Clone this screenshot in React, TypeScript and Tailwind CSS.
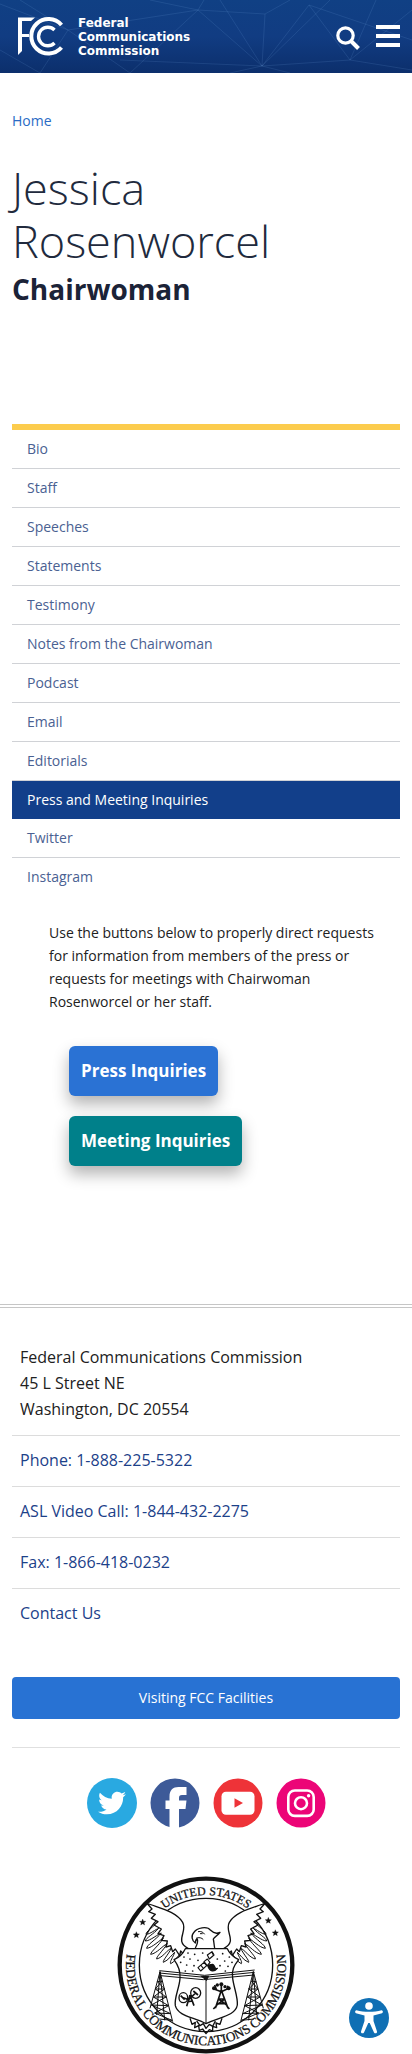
import { FaTwitter } from 'react-icons/fa';

const navItems = [
  'Bio',
  'Staff',
  'Speeches',
  'Statements',
  'Testimony',
  'Notes from the Chairwoman',
  'Podcast',
  'Email',
  'Editorials',
  'Press and Meeting Inquiries',
  'Twitter',
  'Instagram',
];

const currentItem = 'Press and Meeting Inquiries';

const contactLinks = ['Phone: 1-888-225-5322', 'ASL Video Call: 1-844-432-2275', 'Fax: 1-866-418-0232', 'Contact Us'];

function HeaderPattern() {
  return (
    <svg
      className="absolute inset-0 h-full w-full"
      viewBox="0 0 412 73"
      preserveAspectRatio="xMidYMid slice"
      fill="none"
      stroke="#7fb0e8"
      strokeOpacity="0.14"
      aria-hidden="true"
    >
      <path d="M0 4 68 30 198 10 262 66 330 0M40 73 68 30 20 0M68 30 130 73 198 10 150 0M198 10 204 0M198 10 265 14 262 66 120 60M262 66 309 5 412 40M309 5 350 60 412 10M262 66 350 60 412 70M262 66 220 0M265 14 290 0M0 50 40 73M350 60 376 0M230 73 262 66 290 73" />
    </svg>
  );
}

function FccMark() {
  return (
    <svg className="h-[39px] w-[46px]" viewBox="0 0 46 39" fill="none" stroke="#fff" aria-hidden="true">
      <path d="M0 .5H17L13 4H4V17H11V20H4V34L0 38Z" fill="#fff" stroke="none" />
      <path d="M43.5 8A17.2 17.2 0 1 0 43.5 30.5" strokeWidth="4" />
      <path d="M36.5 13A9.3 9.3 0 1 0 36.5 26" strokeWidth="3.4" />
    </svg>
  );
}

function SearchIcon() {
  return (
    <svg className="h-6 w-6" viewBox="0 0 24 24" fill="none" stroke="#fff" aria-hidden="true">
      <circle cx="9.5" cy="9.5" r="7.7" strokeWidth="3.2" />
      <path d="M15 15 22.5 22.5" strokeWidth="4" />
    </svg>
  );
}

function MenuIcon() {
  return (
    <svg className="h-[22px] w-6" viewBox="0 0 24 22" fill="#fff" aria-hidden="true">
      <path d="M0 0H24V4H0ZM0 9H24V13H0ZM0 18H24V22H0Z" />
    </svg>
  );
}

function FacebookIcon() {
  return (
    <svg className="size-[50px]" viewBox="0 0 50 50" aria-hidden="true">
      <circle cx="25" cy="25" r="24.5" fill="#3d5a98" />
      <path d="M19.5 50V31H15.5V22.5H19.5V18.5C19.5 12 23 9 28.5 9H36.5V17H32C29.7 17 29 18 29 20V22.5H36.5L35.5 31H29V50Z" fill="#fff" />
    </svg>
  );
}

function YoutubeIcon() {
  return (
    <svg className="size-[50px]" viewBox="0 0 50 50" aria-hidden="true">
      <circle cx="25" cy="25" r="24.5" fill="#ee3338" />
      <rect x="8.5" y="13.7" width="33" height="23" rx="4.5" fill="#fff" />
      <path d="M21.5 20.3 30 25 21.5 29.7Z" fill="#ee3338" />
    </svg>
  );
}

function InstagramIcon() {
  return (
    <svg className="size-[50px]" viewBox="0 0 50 50" fill="none" stroke="#fff" strokeWidth="2.6" aria-hidden="true">
      <circle cx="25" cy="25" r="24.5" fill="#ec0577" stroke="none" />
      <rect x="12.3" y="12.5" width="25.4" height="25.4" rx="6.5" />
      <circle cx="25" cy="25.2" r="6" />
      <circle cx="32.6" cy="17.8" r="1.7" fill="#fff" stroke="none" />
    </svg>
  );
}

function TwitterIcon() {
  return (
    <span className="flex size-[50px] items-center justify-center rounded-full bg-[#29a9e1] text-white">
      <FaTwitter className="size-7" aria-hidden="true" />
    </span>
  );
}

const socialLinks = [
  { label: 'Twitter', Icon: TwitterIcon },
  { label: 'Facebook', Icon: FacebookIcon },
  { label: 'YouTube', Icon: YoutubeIcon },
  { label: 'Instagram', Icon: InstagramIcon },
];

function Wing() {
  return (
    <>
      <path
        d="M102 94C135 108 190 118 210 152C226 180 184 208 226 230L216 250 204 238 201 252 188 232 180 240 174 222 160 226 164 208 146 206 154 192 136 186 146 172 124 160 136 150 116 140 128 128 108 120 118 112Z"
        fill="#fff"
      />
      <path
        d="M128 158C118 168 100 180 100 188C112 188 130 172 138 170C124 186 98 200 98 208C112 208 138 186 146 184C130 204 102 220 102 230C120 228 142 204 152 200C138 222 114 240 114 248C132 246 152 220 164 216C150 238 130 256 132 262C150 258 164 234 176 230C166 250 150 266 152 272C168 266 178 248 186 242C182 256 170 270 174 276C188 270 192 256 200 250C202 262 192 272 196 278L212 262"
        strokeWidth="3"
      />
    </>
  );
}

function Tower() {
  return (
    <path
      d="M142 300 112 410M142 300 180 450M142 300 132 430M142 300 156 446M134 330 148 328M128 352 156 352M122 376 160 376M116 400 168 402M126 424 174 426M140 442 178 446M134 330 156 352M148 328 128 352 160 376 116 400 174 426M156 352 122 376 168 402 126 424 178 446"
      strokeWidth="3"
    />
  );
}

const shieldStars = [
  [204, 272], [214, 256], [222, 280], [232, 262], [226, 244], [244, 282], [246, 248], [256, 266], [300, 246], [314, 262],
  [330, 246], [322, 282], [336, 268], [350, 256], [346, 284], [358, 272], [240, 298], [218, 298], [338, 298], [270, 244],
];

const ringStars = [
  [90, 152],
  [71, 190],
  [467, 147],
  [488, 184],
];

function Seal() {
  return (
    <svg
      className="size-[178px]"
      viewBox="13 13 534 534"
      fill="none"
      stroke="#111"
      strokeWidth="4"
      strokeLinejoin="round"
      role="img"
      aria-label="Seal of the Federal Communications Commission"
    >
      <defs>
        <path id="seal-top" d="M70 280A210 210 0 0 1 490 280" />
        <path id="seal-bottom" d="M54 200A240 240 0 1 0 506 200" />
      </defs>
      <circle cx="280" cy="280" r="259" strokeWidth="13" fill="#fff" />
      <circle cx="280" cy="280" r="200" />
      <g fill="#111" strokeWidth="0.8" fontFamily="Liberation Serif, serif">
        <text fontSize="36" textAnchor="middle">
          <textPath href="#seal-top" startOffset="50%">UNITED STATES</textPath>
        </text>
        <text fontSize="40" textAnchor="middle">
          <textPath href="#seal-bottom" startOffset="50%">FEDERAL COMMUNICATIONS COMMISSION</textPath>
        </text>
        {ringStars.map(([x, y]) => (
          <path key={x} transform={`translate(${x} ${y})`} d="M0-10 2.6-3.5 9.5-3 4.2 1.4 6 8 0 4.4-6 8-4.2 1.4-9.5-3-2.6-3.5Z" />
        ))}
      </g>
      <Wing />
      <g transform="matrix(-1 0 0 1 560 0)">
        <Wing />
      </g>
      <Tower />
      <g transform="matrix(-1 0 0 1 564 0)">
        <Tower />
      </g>
      <path d="M218 231H344C352 250 366 258 378 264C364 282 356 296 360 320C364 350 376 376 374 400C368 434 318 436 280 456C244 436 196 434 188 402C184 378 200 350 202 320C204 296 196 280 184 264C198 258 210 248 218 231Z" fill="#fff" />
      <path d="M248 229C256 214 256 208 254 202C248 204 248 208 248 214C238 208 234 192 244 182C252 168 284 162 294 176C304 186 314 186 322 182C316 190 306 196 302 202C304 212 304 220 306 229" fill="#fff" />
      <path d="M256 180C266 178 272 182 276 188M262 186H270M250 200C258 196 268 198 272 204" strokeWidth="3" />
      <path d="M140 297 276 311 426 295M140 304 276 317 426 302M144 312 272 324 424 310M280 322V454" strokeWidth="3" />
      <path d="M262 312H290L282 328Z" fill="#111" stroke="none" />
      <g fill="#111" stroke="none">
        {shieldStars.map(([x, y]) => (
          <circle key={`${x}-${y}`} cx={x} cy={y} r="2.6" />
        ))}
      </g>
      <path d="M256 288 274 272 282 282 264 298ZM284 250 298 240 304 250 290 262ZM274 270 284 262 292 272 284 282ZM264 280 272 290" strokeWidth="3.5" />
      <path d="M286 284C292 300 304 302 314 290C304 294 308 280 300 278C294 278 288 280 286 284Z" fill="#111" />
      <ellipse cx="212" cy="378" rx="13" ry="15" />
      <ellipse cx="249" cy="364" rx="15" ry="16" />
      <path d="M212 378 228 384 249 364M232 370 222 404M232 370 244 402M225 390 240 388M204 372 216 384M242 358 256 370" strokeWidth="5" />
      <path d="M326 356 308 410M326 356 346 410M318 382H336M314 396 340 396M318 382 342 400M336 382 310 402M302 412 312 402M350 412 342 402" strokeWidth="5" />
      <path d="M326 358V338M326 360 304 352M326 360 348 350M312 356 306 340M342 354 346 342" strokeWidth="5" />
      <g fill="#111" stroke="none">
        <circle cx="304" cy="350" r="6" />
        <circle cx="314" cy="340" r="5" />
        <circle cx="326" cy="338" r="6" />
        <circle cx="337" cy="345" r="5" />
        <circle cx="348" cy="350" r="6" />
      </g>
      <path d="M232 440 238 458 248 452 246 468 258 462 260 476 270 472 280 486 290 474 300 478 300 464 312 468 310 454 322 458 328 440M252 448 262 462 272 456 280 470 290 458 300 464 308 448" />
    </svg>
  );
}

function AccessibilityIcon() {
  return (
    <svg className="size-10" viewBox="0 0 40 40" fill="#fff" aria-hidden="true">
      <circle cx="20" cy="20" r="20" fill="#0f6fb4" />
      <circle cx="20" cy="8" r="3.8" />
      <path d="M7.5 12.2C15 14.2 25 14.2 32.5 12.2C34 12 34.5 14.5 33 15.2L24.5 17.5V23L28 33.5C28.3 35.5 25.8 36 25 34.5L20.7 25H19.3L15 34.5C14.2 36 11.7 35.5 12 33.5L15.5 23V17.5L7 15.2C5.5 14.5 6 12 7.5 12.2Z" />
    </svg>
  );
}

export default function App() {
  return (
    <div className="bg-white font-['Open_Sans',sans-serif] text-[#212121]">
      <header className="relative flex h-[73px] items-center justify-between bg-linear-to-b from-[#104084] via-[#113c82] to-[#0c2f6c] pr-3 pl-[18px]">
        <HeaderPattern />
        <a href="#" className="relative flex items-center gap-[14px] text-white">
          <FccMark />
          <span className="font-['DejaVu_Sans',sans-serif] text-xs leading-[14px] font-bold">
            Federal
            <br />
            Communications
            <br />
            Commission
          </span>
        </a>
        <div className="relative flex items-center gap-4 pb-0.5">
          <button type="button" aria-label="Search" className="pt-1">
            <SearchIcon />
          </button>
          <button type="button" aria-label="Menu">
            <MenuIcon />
          </button>
        </div>
      </header>

      <main>
        <div className="mx-3">
          <a href="#" className="mt-9 inline-block text-sm leading-6 text-[#2a6bc5]">
            Home
          </a>
          <h1 className="mt-7 text-[45px] leading-[53px] font-light text-[#212a3d]">Jessica Rosenworcel</h1>
          <p className="text-[28px] leading-11 font-bold text-[#1b2337]">Chairwoman</p>
          <nav aria-label="Chairwoman pages" className="mt-[113px] border-t-6 border-[#fccc4d]">
            <ul>
              {navItems.map((item) => (
                <li key={item} className="border-b border-[#d0d2d6] last:border-transparent has-[[aria-current]]:border-b-0">
                  <a
                    href="#"
                    aria-current={item === currentItem ? 'page' : undefined}
                    className="block px-[15px] py-2 text-sm leading-[22px] text-[#4a6192] aria-[current]:bg-[#123f8a] aria-[current]:text-white"
                  >
                    {item}
                  </a>
                </li>
              ))}
            </ul>
          </nav>
        </div>

        <section className="mx-[37px] pt-6 pb-[138px] pl-3">
          <p className="text-sm leading-[23px]">
            Use the buttons below to properly direct requests for information from members of the press or requests for
            meetings with Chairwoman Rosenworcel or her staff.
          </p>
          <div className="mt-[33px] flex flex-col items-start gap-5 pl-5 text-[17px] font-bold text-white">
            <a href="#" className="rounded-md bg-[#2a72d4] px-3 py-[13px] leading-6 shadow-[0_8px_16px_rgba(0,0,0,0.3)]">
              Press Inquiries
            </a>
            <a href="#" className="rounded-md bg-[#00808a] px-3 py-[13px] leading-6 shadow-[0_8px_16px_rgba(0,0,0,0.3)]">
              Meeting Inquiries
            </a>
          </div>
        </section>
      </main>

      <footer className="border-t-4 border-double border-[#c6c6c6] px-3 pt-9">
        <address className="px-2 pb-[13px] leading-[26px] not-italic">
          Federal Communications Commission
          <br />
          45 L Street NE
          <br />
          Washington, DC 20554
        </address>
        <ul>
          {contactLinks.map((label) => (
            <li key={label} className="border-t border-[#dcdcdc] px-2 pt-[11px] pb-[13px]">
              <a href="#" className="block leading-[26px] text-[#1c4189]">
                {label}
              </a>
            </li>
          ))}
        </ul>
        <a href="#" className="mt-[38px] block rounded-sm bg-[#2872d3] py-[10px] text-center text-sm leading-[22px] text-white">
          Visiting FCC Facilities
        </a>
        <div className="mt-7 flex justify-center gap-[13px] border-t border-[#e0e0e0] pt-[30px]">
          {socialLinks.map(({ label, Icon }) => (
            <a key={label} href="#" aria-label={label}>
              <Icon />
            </a>
          ))}
        </div>
        <div className="flex justify-center pt-12">
          <Seal />
        </div>
      </footer>

      <button type="button" aria-label="Accessibility options" className="fixed right-[23px] bottom-4 rounded-full">
        <AccessibilityIcon />
      </button>
    </div>
  );
}
